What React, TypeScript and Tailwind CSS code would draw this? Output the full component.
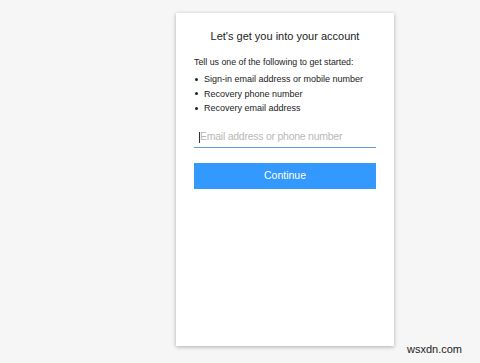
import React from 'react';

const items = ['Sign-in email address or mobile number', 'Recovery phone number', 'Recovery email address'];

const App = () => {
  return (
    <div className="relative w-[480px] h-[363px] bg-[#f6f6f6] overflow-hidden font-['Liberation_Sans',Arial,sans-serif]">
      <div className="absolute left-[176px] top-[13px] w-[218px] h-[333px] bg-white shadow-[0_1px_4px_rgba(0,0,0,0.3)]">
        <div className="flex flex-col px-[18px] pt-[17px]">
          <h1 className="text-center text-[11px] leading-[13px] text-[#222]">Let's get you into your account</h1>
          <p className="mt-[13px] text-[8.8px] leading-[13px] text-[#222]">Tell us one of the following to get started:</p>
          <ul className="mt-[3px] text-[9px] leading-[14.5px] text-[#222]">
            {items.map((t) => (
              <li key={t} className="flex items-center gap-[6px] pl-[1px]">
                <span className="w-[3px] h-[3px] rounded-full bg-[#222]" />
                {t}
              </li>
            ))}
          </ul>
          <div className="mt-[12px] h-[20px] border-b border-[#5b9be0] flex items-center pl-[5px]">
            <span className="w-px h-[11px] bg-[#333]" />
            <span className="text-[10.5px] tracking-[-0.25px] text-[#b8b8b8]">Email address or phone number</span>
          </div>
          <button className="mt-[15px] h-[26px] w-full bg-[#3399ff] text-white text-[10.5px]">Continue</button>
        </div>
      </div>
      <div className="absolute left-[407px] top-[341px] text-[11px] text-[#222]">wsxdn.com</div>
    </div>
  );
};

export default App;
